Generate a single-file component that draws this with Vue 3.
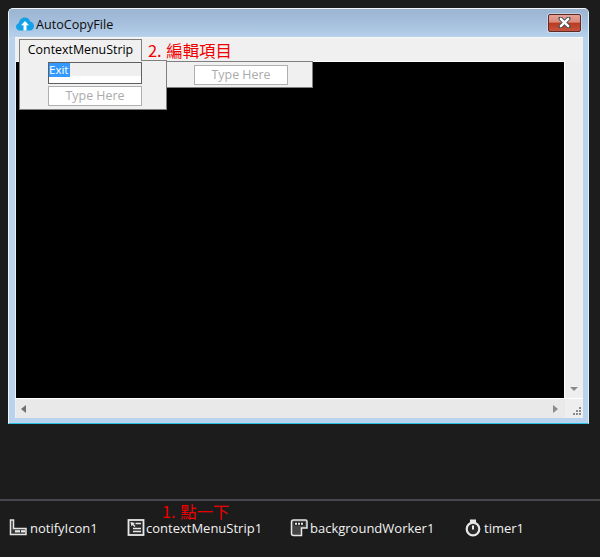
<script setup>
const trays = [
  { id: 'notify', label: 'notifyIcon1', w: 118, gap: 3 },
  { id: 'context', label: 'contextMenuStrip1', w: 163, gap: 1 },
  { id: 'worker', label: 'backgroundWorker1', w: 175, gap: 2 },
  { id: 'timer', label: 'timer1', w: 60, gap: 3 }
]
</script>

<template>
  <div class="page">
    <div class="stage">
      <div class="window">
        <div class="titlebar">
          <svg class="cloud" width="18" height="14" viewBox="0 0 18 14">
            <path d="M4 13.500C1.800 13.500 0 12 0 9.800 0 8 1.200 6.700 2.800 6.300 3.200 3 5.600 .6 8.800 .6c2.500 0 4.600 1.500 5.400 3.800 2.200.3 3.800 2.300 3.800 4.600 0 2.500-1.800 4.500-4.200 4.500Z" fill="#12a0e6"/>
            <path d="M9 4 5 8.300h2.500v5.200h3V8.300H13Z" fill="#fff"/>
          </svg>
          <span class="title">AutoCopyFile</span>
          <div class="close">
            <svg width="13" height="11" viewBox="0 0 13 11">
              <path d="M2.500 1.500 10.500 9.500M10.500 1.500 2.500 9.500" stroke="#39474f" stroke-width="4" stroke-linecap="round"/>
              <path d="M2.800 1.800 10.200 9.200M10.200 1.800 2.800 9.200" stroke="#fff" stroke-width="2.400" stroke-linecap="round"/>
            </svg>
          </div>
        </div>
        <div class="client">
          <div class="menubar"></div>
          <div class="workarea">
            <div class="black"></div>
            <div class="vscroll"><span class="arrow-down"></span></div>
          </div>
          <div class="bottom">
            <div class="hscroll">
              <span class="arrow-left"></span>
              <span class="arrow-right"></span>
            </div>
            <div class="grip">
              <svg width="12" height="12" viewBox="0 0 12 12" fill="#8a8a8a">
                <rect x="8" y="1" width="2" height="2"/><rect x="5" y="4" width="2" height="2"/><rect x="8" y="4" width="2" height="2"/>
                <rect x="2" y="7" width="2" height="2"/><rect x="5" y="7" width="2" height="2"/><rect x="8" y="7" width="2" height="2"/>
              </svg>
            </div>
          </div>
        </div>

        <div class="strip-tab">ContextMenuStrip</div>
        <div class="note note-edit">2. 編輯項目</div>
        <div class="dropdown">
          <div class="field field-active"><span class="selected">Exit</span></div>
          <div class="field">Type Here</div>
        </div>
        <div class="submenu"><div class="field">Type Here</div></div>
      </div>
    </div>

    <div class="tray">
      <div class="note note-click">1. 點一下</div>
      <div class="tray-row">
        <div v-for="t in trays" :key="t.id" class="tray-item" :style="{ width: t.w + 'px', gap: t.gap + 'px' }">
          <svg v-if="t.id === 'notify'" width="18" height="18" viewBox="0 0 18 18">
            <path d="M1.500 1H4.500V9.500H17V15.500H1.500Z" fill="#3a3a3a" stroke="#e4e4e4" stroke-width="1.500"/>
            <rect x="6" y="11.200" width="5" height="2.200" fill="#e8e8e8"/>
            <rect x="12" y="11.200" width="4" height="2.200" fill="#e8e8e8"/>
          </svg>
          <svg v-else-if="t.id === 'context'" width="18" height="18" viewBox="0 0 18 18">
            <rect x="1.500" y="1" width="15" height="15" fill="#2a2a2a" stroke="#e8e8e8" stroke-width="1.800"/>
            <path d="M3.500 3 8 4 6.500 5 8.500 7 7.500 8 5.500 6 4.500 7.500Z" fill="#e8e8e8"/>
            <path d="M8.500 4.500H14M6 9.500H14M6 12.500H14" stroke="#e8e8e8" stroke-width="1.400"/>
          </svg>
          <svg v-else-if="t.id === 'worker'" width="18" height="18" viewBox="0 0 18 18">
            <path d="M3.500 1H15.500Q17 1 17 2.500V9H11.500V16.500H3.500Q1.500 16.500 1.500 14.500V3Q1.500 1 3.500 1Z" fill="#454545" stroke="#e8e8e8" stroke-width="1.500"/>
            <rect x="4" y="3" width="11" height="3.500" fill="#1e1e1e"/>
            <path d="M5 4.700H14" stroke="#e8e8e8" stroke-width="2" stroke-dasharray="2 1"/>
          </svg>
          <svg v-else width="16" height="18" viewBox="0 0 16 18">
            <rect x="5" y="0.500" width="6" height="2.500" fill="#e8e8e8"/>
            <circle cx="8" cy="10" r="6.300" fill="#2a2a2a" stroke="#e8e8e8" stroke-width="2.200"/>
            <path d="M8 6.500V10.500" stroke="#e8e8e8" stroke-width="2"/>
          </svg>
          <span>{{ t.label }}</span>
        </div>
      </div>
    </div>
  </div>
</template>

<style scoped>
.page {
  width: 600px;
  height: 557px;
  background: #1c1c1c;
  display: flex;
  flex-direction: column;
  overflow: hidden;
  font-family: "Open Sans", "Noto Sans", sans-serif;
}
.stage {
  height: 499px;
  padding: 8px 0 0 8px;
  box-sizing: border-box;
}
.window {
  position: relative;
  width: 581px;
  height: 416px;
  box-sizing: border-box;
  border: 1px solid #f2f6fa;
  border-bottom-color: #2bbfe0;
  border-right-color: #d8f2fb;
  border-radius: 5px 5px 0 0;
  background: #b9d3ee;
  padding: 0 5px 5px 6px;
  display: flex;
  flex-direction: column;
}
.titlebar {
  height: 28px;
  flex: none;
  display: flex;
  align-items: center;
  background: linear-gradient(180deg, #9ab4d2 0%, #a5bfdc 50%, #b6d1ec 100%);
  margin: 0 -5px 0 -6px;
  padding: 2px 0 0 7px;
  box-sizing: border-box;
  border-radius: 4px 4px 0 0;
}
.cloud { flex: none; }
.title {
  margin-left: 2px;
  font-size: 12.6px;
  color: #0b0b0b;
}
.close {
  margin-left: auto;
  margin-right: 7px;
  margin-top: -3px;
  width: 33px;
  height: 18px;
  box-sizing: border-box;
  border: 1px solid #5d2a2a;
  box-shadow: 0 0 0 1px rgba(255, 255, 255, 0.35);
  border-radius: 2px;
  background: linear-gradient(180deg, #e6a195 0%, #d98a7c 45%, #b93a20 50%, #c6543c 100%);
  display: flex;
  align-items: center;
  justify-content: center;
}
.client {
  flex: 1;
  display: flex;
  flex-direction: column;
  background: #f0f0f0;
  border-top: 1px solid #f8f8f8;
  min-height: 0;
}
.menubar {
  height: 23px;
  flex: none;
}
.workarea {
  flex: 1;
  display: flex;
  min-height: 0;
  padding-left: 1px;
}
.black {
  flex: 1;
  background: #000;
  border-top: 1px solid #fff;
  border-right: 1px solid #fff;
}
.vscroll {
  width: 18px;
  flex: none;
  background: #eeeeee;
  display: flex;
  align-items: flex-end;
  justify-content: center;
  padding-bottom: 7px;
  box-sizing: border-box;
}
.arrow-down {
  width: 0;
  height: 0;
  border-left: 4px solid transparent;
  border-right: 4px solid transparent;
  border-top: 4px solid #8a8a8a;
}
.bottom {
  height: 19px;
  flex: none;
  display: flex;
  border-top: 1px solid #fff;
  padding-left: 1px;
}
.hscroll {
  flex: 1;
  background: #e9e9e9;
  display: flex;
  align-items: center;
  justify-content: space-between;
  padding: 0 7px 0 5px;
}
.arrow-left {
  border-top: 4px solid transparent;
  border-bottom: 4px solid transparent;
  border-right: 5px solid #707070;
}
.arrow-right {
  border-top: 4px solid transparent;
  border-bottom: 4px solid transparent;
  border-left: 5px solid #8a8a8a;
}
.grip {
  width: 18px;
  flex: none;
  display: flex;
  align-items: flex-end;
  justify-content: flex-end;
  background: #eeeeee;
}
.strip-tab {
  position: absolute;
  left: 10px;
  top: 30px;
  width: 123px;
  height: 22px;
  box-sizing: border-box;
  background: #f0f0f0;
  border: 1px solid #7f7f7f;
  border-bottom: none;
  text-align: center;
  font-size: 12.4px;
  line-height: 20px;
  color: #000;
  z-index: 2;
}
.note {
  font-family: "Noto Sans CJK TC", "Noto Sans", sans-serif;
  color: #f00000;
  font-size: 16.400px;
  font-weight: 400;
  word-spacing: 1px;
  white-space: nowrap;
}
.note-edit {
  position: absolute;
  left: 139px;
  top: 30px;
  line-height: 22px;
}
.dropdown {
  position: absolute;
  left: 10px;
  top: 51px;
  width: 148px;
  height: 50px;
  box-sizing: border-box;
  background: #f0f0f0;
  border: 1px solid #7f7f7f;
  padding: 1px 0 0 28px;
  z-index: 1;
}
.field {
  width: 94px;
  height: 20px;
  box-sizing: border-box;
  background: #fff;
  border: 1px solid #b0b0b0;
  font-size: 12.4px;
  line-height: 18px;
  text-align: center;
  color: #ababab;
}
.field-active {
  border-color: #606060;
  text-align: left;
  background: linear-gradient(180deg, #efefef 0 13px, #fff 13px);
  margin-bottom: 2px;
  height: 22px;
  color: #fff;
}
.selected {
  display: inline-block;
  background: #3399ff;
  height: 14px;
  line-height: 14px;
  vertical-align: top;
  width: 21px;
  font-size: 11.500px;
}
.submenu {
  position: absolute;
  left: 156px;
  top: 52px;
  width: 148px;
  height: 27px;
  box-sizing: border-box;
  background: #f0f0f0;
  border: 1px solid #7f7f7f;
  padding: 3px 0 0 28px;
}
.tray {
  position: relative;
  flex: 1;
  border-top: 2px solid #46464c;
  background: #1c1c1c;
  padding: 18px 0 0 9px;
  box-sizing: border-box;
}
.note-click {
  position: absolute;
  left: 162px;
  top: 2px;
  line-height: 16px;
  color: #ee0000;
}
.tray-row {
  display: flex;
  align-items: center;
}
.tray-item {
  display: flex;
  align-items: center;
  color: #f1f1f1;
  font-size: 13px;
  line-height: 16px;
  flex: none;
}
</style>
